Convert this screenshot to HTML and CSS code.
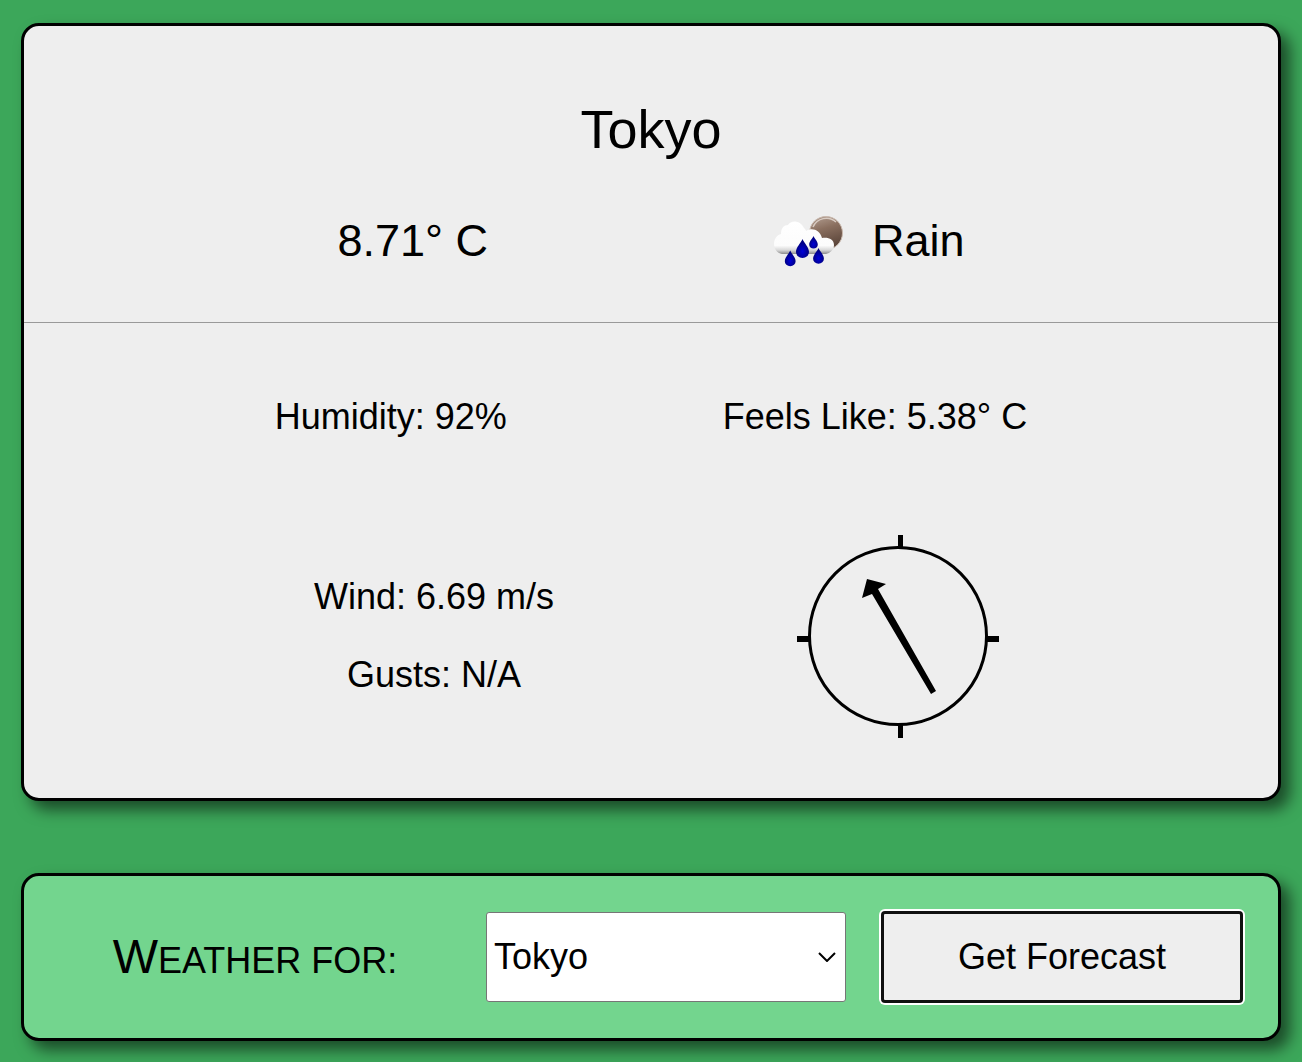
FILE: index.html
```html
<!DOCTYPE html>
<html lang="en">
<head>
  <meta charset="utf-8">
  <meta name="viewport" content="width=device-width, initial-scale=1">
  <title>Weather</title>
  <link rel="stylesheet" href="styles.css">
</head>
<body>
  <main class="page">
    <article class="card weather">
      <header class="summary">
        <h1 class="city">Tokyo</h1>
        <div class="conditions">
          <p class="temperature">8.71° C</p>
          <div class="sky">
            <svg class="sky-icon" viewBox="0 0 90 90" aria-hidden="true">
              <defs>
                <linearGradient id="moon" x1="0" y1="0" x2="0.3" y2="1">
                  <stop offset="0" stop-color="#b5a194"/>
                  <stop offset="0.45" stop-color="#8a6f5f"/>
                  <stop offset="1" stop-color="#5c463b"/>
                </linearGradient>
                <linearGradient id="cloud" x1="0" y1="0" x2="0" y2="1">
                  <stop offset="0" stop-color="#ffffff"/>
                  <stop offset="0.74" stop-color="#fcfcfc"/>
                  <stop offset="0.88" stop-color="#d8d8d8"/>
                  <stop offset="1" stop-color="#8c8c8c"/>
                </linearGradient>
                <radialGradient id="drop" cx="0.5" cy="0.65" r="0.5">
                  <stop offset="0" stop-color="#0000d8"/>
                  <stop offset="1" stop-color="#000080"/>
                </radialGradient>
                <path id="raindrop" d="M0 -9C1.5 -5 6.5 -1 6.5 4A6.5 6 0 0 1 -6.5 4C-6.5 -1 -1.5 -5 0 -9Z"/>
              </defs>
              <circle cx="64" cy="37" r="16.5" fill="url(#moon)" stroke="#c9b9ae" stroke-width="1"/>
              <path d="M51 31A14.5 14.5 0 0 1 74 26" fill="none" stroke="#d8cbc2" stroke-width="1.5"/>
              <path d="M20 58C15 57 12 53 12 48C12 43 15 39 19 38C19 32 22 29 26 29C29 24 38 24 42 32C43 33 44 34 44 35C50 31 58 34 60 42C66 41 72 43 72 49C72 54 68 57 64 58Z" fill="url(#cloud)"/>
              <g fill="url(#drop)">
                <use href="#raindrop" transform="translate(40.5 52)"/>
                <use href="#raindrop" transform="translate(51.5 46) scale(.66)"/>
                <use href="#raindrop" transform="translate(28.2 62) scale(.83)"/>
                <use href="#raindrop" transform="translate(56.5 59.5) scale(.83)"/>
              </g>
            </svg>
            <p class="sky-text">Rain</p>
          </div>
        </div>
      </header>
      <section class="details">
        <div class="air">
          <p>Humidity: 92%</p>
          <p>Feels Like: 5.38° C</p>
        </div>
        <div class="wind">
          <div class="wind-speeds">
            <p>Wind: 6.69 m/s</p>
            <p>Gusts: N/A</p>
          </div>
          <svg class="compass" viewBox="0 0 180 180" role="img" aria-label="Wind direction">
            <circle cx="90" cy="90" r="88.5" fill="none" stroke="#000" stroke-width="3"/>
            <path d="M90 -11h5V2h-5zM90 179h5v13h-5zM-11 90H1v6h-12zM179 90h12v6h-12z"/>
            <path d="M59 33L78 38L70 43L128 145L123 148L64 48L54 52Z"/>
          </svg>
        </div>
      </section>
    </article>
    <form class="card picker">
      <label class="picker-label" for="city">Weather for:</label>
      <div class="select-wrap">
        <select class="picker-select" id="city" name="city">
          <option>Tokyo</option>
        </select>
        <svg class="select-arrow" viewBox="0 0 18 10" aria-hidden="true">
          <path d="M1 1L9 9L17 1" fill="none" stroke="#000" stroke-width="2"/>
        </svg>
      </div>
      <button class="picker-button" type="button">Get Forecast</button>
    </form>
  </main>
</body>
</html>
```
FILE: styles.css
```css
* {
  box-sizing: border-box;
}

body {
  margin: 0;
  background: #3ca75a;
  color: #000;
  font-family: "Liberation Sans", Arial, sans-serif;
  font-size: 36px;
  line-height: 42px;
}

h1,
p {
  margin: 0;
  font-weight: normal;
}

.page {
  display: flex;
  flex-direction: column;
  gap: 72px;
  padding: 23px 21px 21px;
}

.card {
  border: 3px solid #000;
  border-radius: 18px;
  box-shadow: 9px 9px 15px rgba(0, 0, 0, 0.55);
}

.weather {
  background: #eee;
}

.summary {
  padding: 72px 0 36px;
  border-bottom: 1px solid #999;
}

.city {
  margin-bottom: 36px;
  font-size: 54px;
  line-height: 62px;
  text-align: center;
}

.conditions {
  display: flex;
  align-items: center;
  justify-content: space-between;
  padding: 0 25%;
  font-size: 45px;
}

.sky {
  display: flex;
  align-items: center;
  gap: 20px;
}

.sky-icon {
  width: 90px;
  height: 90px;
}

.details {
  display: flex;
  flex-direction: column;
  gap: 108px;
  padding: 73px 0 72px;
}

.air {
  display: flex;
  justify-content: space-between;
  padding: 0 20%;
}

.wind {
  display: flex;
  align-items: center;
  justify-content: center;
  gap: 254px;
}

.wind-speeds {
  display: flex;
  flex-direction: column;
  gap: 36px;
  text-align: center;
}

.compass {
  width: 180px;
  height: 180px;
  overflow: visible;
}

.picker {
  display: flex;
  align-items: center;
  gap: 36px;
  padding: 36px;
  background: #73d58e;
}

.picker-label {
  flex: 1;
  text-align: center;
  text-transform: uppercase;
}

.picker-label::first-letter {
  font-size: 48px;
  line-height: 60px;
}

.select-wrap {
  position: relative;
  width: 360px;
}

.picker-select {
  display: block;
  width: 100%;
  height: 90px;
  padding: 0 7px;
  border: 1px solid #767676;
  border-radius: 3px;
  appearance: none;
  background: #fff;
  color: #000;
  font: inherit;
}

.select-arrow {
  position: absolute;
  top: 40px;
  right: 10px;
  width: 18px;
  height: 10px;
  pointer-events: none;
}

.picker-button {
  width: 360px;
  height: 90px;
  border: 2px solid #101010;
  border-radius: 3px;
  background: #eee;
  box-shadow: 0 0 0 1px #101010, 0 0 0 3px #fff;
  color: #000;
  font: inherit;
}
```
